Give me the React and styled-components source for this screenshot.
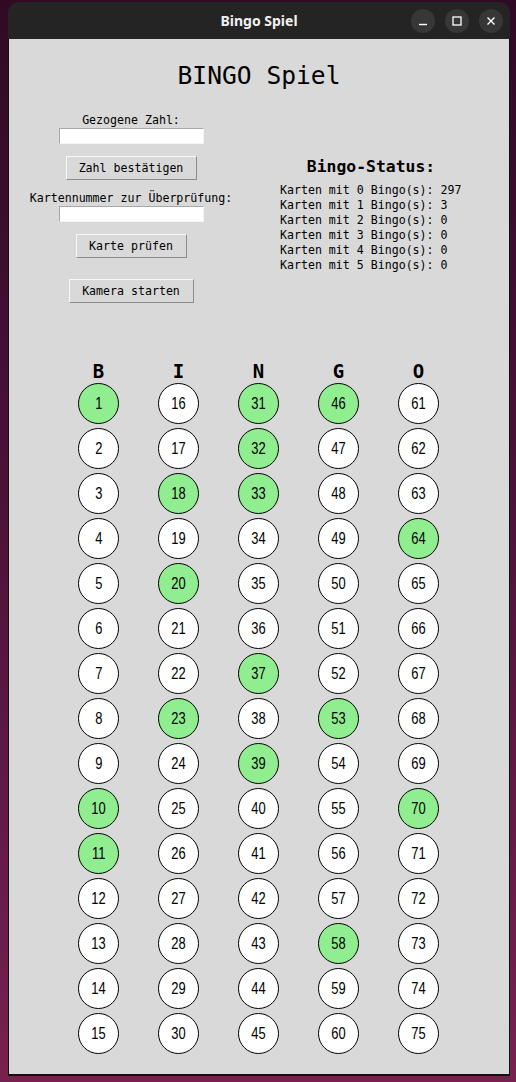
import React from 'react'
import styled, { createGlobalStyle } from 'styled-components'

const GlobalStyle = createGlobalStyle`
    html, body {
        margin: 0;
        padding: 0;
    }
    body {
        width: 516px;
        height: 1082px;
        overflow: hidden;
        background: linear-gradient(180deg, #300a25 0%, #4a1238 45%, #76224f 100%);
    }
`

const Desktop = styled.div`
    box-sizing: border-box;
    width: 516px;
    height: 1082px;
    padding: 2px 6px 0 8px;
`

const Window = styled.div`
    display: flex;
    flex-direction: column;
    width: 502px;
`

const TitleBar = styled.div`
    position: relative;
    height: 37px;
    background: #242424;
    border-radius: 11px 11px 0 0;
    display: flex;
    align-items: center;
    justify-content: center;
    color: #f0f0f0;
    font-family: "Noto Sans", "DejaVu Sans", sans-serif;
    font-weight: 700;
    font-size: 14px;
`

const Controls = styled.div`
    position: absolute;
    right: 7px;
    top: 7px;
    display: flex;
    gap: 10px;
`

const CtrlButton = styled.div`
    width: 24px;
    height: 24px;
    border-radius: 50%;
    background: #373737;
    display: flex;
    align-items: center;
    justify-content: center;
`

const Content = styled.div`
    box-sizing: border-box;
    height: 1037px;
    background: #d9d9d9;
    border: 1px solid #111;
    border-top: none;
    border-bottom-width: 2px;
    display: flex;
    flex-direction: column;
    font-family: "DejaVu Sans Mono", "Liberation Mono", monospace;
    color: #000;
`

const Heading = styled.div`
    margin-top: 22px;
    height: 30px;
    line-height: 30px;
    text-align: center;
    font-size: 24.6px;
`

const Panels = styled.div`
    display: flex;
    margin-top: 22px;
`

const LeftPanel = styled.div`
    width: 244px;
    display: flex;
    flex-direction: column;
    align-items: center;
`

const RightPanel = styled.div`
    width: 236px;
    padding-top: 44px;
    display: flex;
    flex-direction: column;
    align-items: center;
`

const Label = styled.div`
    font-size: 11.6px;
    line-height: 15px;
    height: 15px;
    margin-top: ${ p => p.$top || 0 }px;
`

const Entry = styled.div`
    box-sizing: border-box;
    width: 145px;
    height: 16px;
    background: #fff;
    border: 1px solid;
    border-color: #a8a8a8 #f4f4f4 #f4f4f4 #a8a8a8;
`

const Button = styled.button`
    box-sizing: border-box;
    height: 24px;
    width: ${ p => p.$width }px;
    margin-top: ${ p => p.$top }px;
    padding: 0;
    background: #d9d9d9;
    border: 1px solid;
    border-color: #f8f8f8 #8c8c8c #8c8c8c #f8f8f8;
    font-family: "DejaVu Sans Mono", "Liberation Mono", monospace;
    font-size: 11.6px;
    color: #000;
`

const StatusTitle = styled.div`
    font-size: 16.4px;
    font-weight: 700;
    line-height: 20px;
    margin-bottom: 6px;
`

const StatusList = styled.div`
    display: flex;
    flex-direction: column;
    align-self: flex-start;
    margin-left: 27px;
`

const StatusLine = styled.div`
    font-size: 11.6px;
    line-height: 15px;
    white-space: pre;
`

const Board = styled.div`
    margin-top: 58px;
    margin-left: 69px;
    display: grid;
    grid-template-columns: repeat(5, 41px);
    column-gap: 39px;
    row-gap: 4px;
`

const ColumnHead = styled.div`
    height: 20px;
    line-height: 20px;
    text-align: center;
    font-size: 19px;
    font-weight: 700;
    margin-bottom: -2px;
`

const Ball = styled.div`
    box-sizing: border-box;
    width: 41px;
    height: 41px;
    border-radius: 50%;
    border: 1px solid #000;
    background: ${ p => p.$hit ? '#90ee90' : '#ffffff' };
    display: flex;
    align-items: center;
    justify-content: center;
    color: #000;
`

const BallNumber = styled.span`
    display: inline-block;
    font-family: "Liberation Sans", "DejaVu Sans", sans-serif;
    font-size: 17px;
    line-height: 17px;
    transform: scaleX(0.76);
`

const drawn = new Set([1, 10, 11, 18, 20, 23, 31, 32, 33, 37, 39, 46, 53, 58, 64, 70])

const status = [297, 3, 0, 0, 0, 0]

const letters = ['B', 'I', 'N', 'G', 'O']

export default function App() {
    const cells = []
    for (let row = 0; row < 15; row++) {
        for (let col = 0; col < 5; col++) {
            const n = col * 15 + row + 1
            cells.push(
                <Ball key={ n } $hit={ drawn.has(n) }>
                    <BallNumber>{ n }</BallNumber>
                </Ball>
            )
        }
    }

    return (
        <>
            <GlobalStyle />
            <Desktop>
                <Window>
                    <TitleBar>
                        Bingo Spiel
                        <Controls>
                            <CtrlButton>
                                <svg width="10" height="10" viewBox="0 0 10 10">
                                    <path d="M1 8.5h8" stroke="#fff" strokeWidth="1.4" />
                                </svg>
                            </CtrlButton>
                            <CtrlButton>
                                <svg width="10" height="10" viewBox="0 0 10 10">
                                    <rect x="1" y="1" width="8" height="8" fill="none" stroke="#fff" strokeWidth="1.3" />
                                </svg>
                            </CtrlButton>
                            <CtrlButton>
                                <svg width="10" height="10" viewBox="0 0 10 10">
                                    <path d="M1.5 1.5l7 7M8.5 1.5l-7 7" stroke="#fff" strokeWidth="1.4" />
                                </svg>
                            </CtrlButton>
                        </Controls>
                    </TitleBar>
                    <Content>
                        <Heading>BINGO Spiel</Heading>
                        <Panels>
                            <LeftPanel>
                                <Label>Gezogene Zahl:</Label>
                                <Entry />
                                <Button $width={ 131 } $top={ 12 }>Zahl bestätigen</Button>
                                <Label $top={ 11 }>Kartennummer zur Überprüfung:</Label>
                                <Entry />
                                <Button $width={ 111 } $top={ 12 }>Karte prüfen</Button>
                                <Button $width={ 125 } $top={ 21 }>Kamera starten</Button>
                            </LeftPanel>
                            <RightPanel>
                                <StatusTitle>Bingo-Status:</StatusTitle>
                                <StatusList>
                                    { status.map((count, i) => (
                                        <StatusLine key={ i }>{ `Karten mit ${ i } Bingo(s): ${ count }` }</StatusLine>
                                    )) }
                                </StatusList>
                            </RightPanel>
                        </Panels>
                        <Board>
                            { letters.map(l => <ColumnHead key={ l }>{ l }</ColumnHead>) }
                            { cells }
                        </Board>
                    </Content>
                </Window>
            </Desktop>
        </>
    )
}
